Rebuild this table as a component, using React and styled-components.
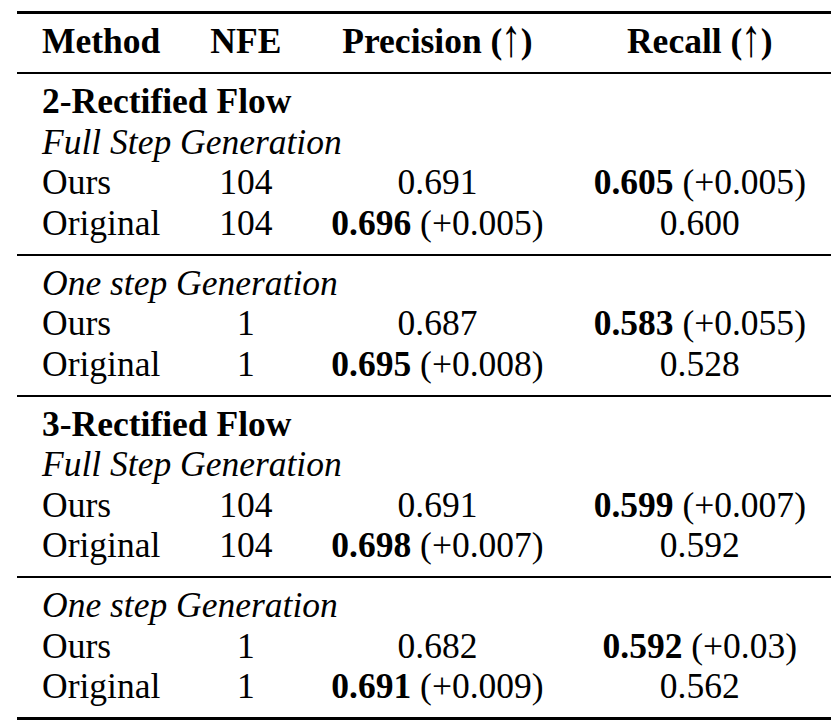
import React from "react";
import styled, { createGlobalStyle } from "styled-components";

const Global = createGlobalStyle`
  html, body { margin: 0; padding: 0; background: #fff; }
  body { font-family: "Liberation Serif", "Times New Roman", serif; color: #000; }
`;

const Page = styled.div`
  padding: 11px 0 0 17px;
`;

const Table = styled.table`
  border-collapse: separate;
  border-spacing: 0;
  font-family: "Liberation Serif", "Times New Roman", serif;
  font-size: 35.5px;
  line-height: 40.5px;
  color: #000;
`;

const RuleCell = styled.td`
  padding: 0;
  height: ${(p) => p.$h}px;
  background: #000;
  line-height: 0;
  font-size: 0;
`;

const Cell = styled.td`
  padding: ${(p) => (p.$top ? "7px" : "0")} 25px ${(p) => (p.$bottom ? "10.5px" : "0")};
  text-align: ${(p) => p.$align || "center"};
  font-weight: ${(p) => (p.$bold ? 700 : 400)};
  font-style: ${(p) => (p.$italic ? "italic" : "normal")};
  white-space: nowrap;
`;

const Head = styled(Cell).attrs({ as: "th" })`
  font-weight: 700;
`;

const B = styled.b`
  font-weight: 700;
`;

const Arrow = styled.span`
  display: inline-block;
  font-weight: 400;
  font-family: "Liberation Serif", "Times New Roman", serif;
  width: 0.52em;
  text-align: center;
  transform: scale(1.15, 1.5);
  transform-origin: 50% 62%;
`;

const Rule = ({ h }) => (
  <tr>
    <RuleCell colSpan={4} $h={h} />
  </tr>
);

const Value = ({ v, delta, best }) =>
  best ? (
    <>
      <B>{v}</B> ({delta})
    </>
  ) : (
    v
  );

const groups = [
  {
    title: "2-Rectified Flow",
    sub: "Full Step Generation",
    rows: [
      ["Ours", "104", ["0.691"], ["0.605", "+0.005"]],
      ["Original", "104", ["0.696", "+0.005"], ["0.600"]],
    ],
  },
  {
    sub: "One step Generation",
    rows: [
      ["Ours", "1", ["0.687"], ["0.583", "+0.055"]],
      ["Original", "1", ["0.695", "+0.008"], ["0.528"]],
    ],
  },
  {
    title: "3-Rectified Flow",
    sub: "Full Step Generation",
    rows: [
      ["Ours", "104", ["0.691"], ["0.599", "+0.007"]],
      ["Original", "104", ["0.698", "+0.007"], ["0.592"]],
    ],
  },
  {
    sub: "One step Generation",
    rows: [
      ["Ours", "1", ["0.682"], ["0.592", "+0.03"]],
      ["Original", "1", ["0.691", "+0.009"], ["0.562"]],
    ],
  },
];

export default function App() {
  return (
    <>
      <Global />
      <Page>
        <Table>
          <tbody>
            <Rule h={3} />
            <tr>
              <Head $top $bottom $align="left">Method</Head>
              <Head $top $bottom>NFE</Head>
              <Head $top $bottom>
                Precision (<Arrow>↑</Arrow>)
              </Head>
              <Head $top $bottom>
                Recall (<Arrow>↑</Arrow>)
              </Head>
            </tr>
            {groups.map((g, gi) => (
              <React.Fragment key={gi}>
                <Rule h={2} />
                {g.title && (
                  <tr>
                    <Cell colSpan={4} $align="left" $bold $top>
                      {g.title}
                    </Cell>
                  </tr>
                )}
                <tr>
                  <Cell colSpan={4} $align="left" $italic $top={!g.title}>
                    {g.sub}
                  </Cell>
                </tr>
                {g.rows.map((r, ri) => {
                  const last = ri === g.rows.length - 1;
                  return (
                    <tr key={ri}>
                      <Cell $align="left" $bottom={last}>{r[0]}</Cell>
                      <Cell $bottom={last}>{r[1]}</Cell>
                      <Cell $bottom={last}>
                        <Value v={r[2][0]} delta={r[2][1]} best={r[2].length > 1} />
                      </Cell>
                      <Cell $bottom={last}>
                        <Value v={r[3][0]} delta={r[3][1]} best={r[3].length > 1} />
                      </Cell>
                    </tr>
                  );
                })}
              </React.Fragment>
            ))}
            <Rule h={3} />
          </tbody>
        </Table>
      </Page>
    </>
  );
}
